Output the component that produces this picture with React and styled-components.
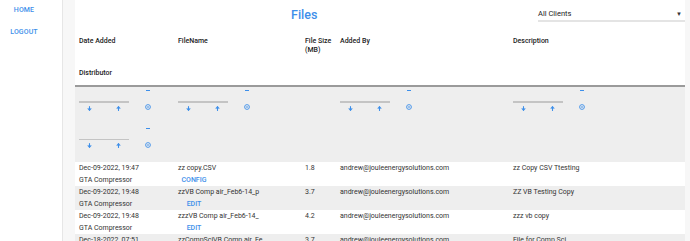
import React from "react";
import styled, { createGlobalStyle } from "styled-components";

const Global = createGlobalStyle`
  html, body {
    margin: 0;
    padding: 0;
    background: #f7f7f7;
    font-family: Roboto, "Liberation Sans", Arial, sans-serif;
  }
`;

const BLUE = "#3d8fea";

const Page = styled.div`
  display: flex;
  height: 241px;
  overflow: hidden;
`;

const Sidebar = styled.nav`
  width: 62px;
  flex: none;
  background: #fff;
  border-right: 1px solid #e6e6e6;
  box-sizing: content-box;
`;

const NavList = styled.div`
  width: 48px;
  display: flex;
  flex-direction: column;
  align-items: center;
  padding-top: 6px;
  gap: 14px;
`;

const NavLink = styled.a`
  font-size: 7px;
  line-height: 8px;
  font-weight: 500;
  color: ${BLUE};
  text-transform: uppercase;
  letter-spacing: 0.1px;
`;

const Main = styled.main`
  width: 610px;
  margin-left: 12px;
  background: #fff;
  flex: none;
`;

const Toolbar = styled.div`
  height: 30px;
  display: flex;
  align-items: flex-start;
`;

const Title = styled.h2`
  margin: 0;
  padding: 8px 0 0 216px;
  font-size: 12.5px;
  line-height: 14px;
  font-weight: 500;
  color: ${BLUE};
  flex: 1;
`;

const Select = styled.div`
  width: 147px;
  height: 22px;
  box-sizing: border-box;
  border-bottom: 2px solid #e4e4e4;
  display: flex;
  align-items: center;
  justify-content: space-between;
  padding: 6px 3px 0 0;
  font-size: 7.5px;
  color: #222;
`;

const Caret = styled.span`
  font-size: 6px;
  color: #333;
`;

const Row = styled.div`
  display: flex;
  flex-wrap: wrap;
  align-items: flex-start;
  background: ${(p) => p.$bg || "#fff"};
`;

const HeaderRow = styled(Row)`
  border-bottom: 2px solid #9a9a9a;
`;

const FilterArea = styled(Row)`
  background: #eeeeee;
`;

const Cell = styled.div`
  width: ${(p) => p.$w}px;
  box-sizing: border-box;
  padding: 0 4px;
  font-size: 7px;
  line-height: 12px;
  color: #333;
  white-space: nowrap;
  overflow: hidden;
`;

const HeadCell = styled(Cell)`
  padding: 7px 4px;
  line-height: 9px;
  font-weight: 500;
  color: #222;
`;

const ActionCell = styled(Cell)`
  text-align: center;
  padding: 0;
  font-weight: 500;
  color: ${BLUE};
  text-transform: uppercase;
`;

const FilterCell = styled.div`
  width: ${(p) => p.$w}px;
  height: 37.5px;
  box-sizing: border-box;
  padding: 0 4px;
  display: flex;
`;

const InputCol = styled.div`
  width: 50px;
  padding-top: 14px;
`;

const Underline = styled.div`
  height: 1.5px;
  background: #c4c4c4;
`;

const Arrows = styled.div`
  display: flex;
  justify-content: space-between;
  padding: 3px 8px 0 8px;
`;

const Controls = styled.div`
  margin-left: 16px;
  padding-top: 2px;
  display: flex;
  flex-direction: column;
  align-items: center;
  gap: 13px;
`;

const Minus = styled.div`
  width: 4px;
  height: 1.4px;
  background: ${BLUE};
  margin-top: 1px;
`;

const Arrow = ({ up }) => (
  <svg width="5" height="5" viewBox="0 0 12 12">
    <g transform={up ? "rotate(180 6 6)" : undefined} fill="none" stroke={BLUE} strokeWidth="2.6" strokeLinecap="round">
      <path d="M6 1.5v8.5" />
      <path d="M2.5 6.5L6 10l3.5-3.5" />
    </g>
  </svg>
);

const ClearIcon = () => (
  <svg width="6" height="6" viewBox="0 0 12 12">
    <circle cx="6" cy="6" r="4.8" fill="none" stroke={BLUE} strokeWidth="1.8" />
    <path d="M3.8 6h4.4" stroke={BLUE} strokeWidth="1.9" />
  </svg>
);

const Filter = ({ w }) => (
  <FilterCell $w={w}>
    <InputCol>
      <Underline />
      <Arrows>
        <Arrow />
        <Arrow up />
      </Arrows>
    </InputCol>
    <Controls>
      <Minus />
      <ClearIcon />
    </Controls>
  </FilterCell>
);

const W = { date: 99, name: 127, size: 35, by: 173, desc: 176, dist: 99, action: 40 };

const rows = [
  ["Dec-09-2022, 19:47", "zz copy.CSV", "1.8", "zz Copy CSV Ttesting", "Config"],
  ["Dec-09-2022, 19:48", "zzVB Comp air_Feb6-14_p", "3.7", "ZZ VB Testing Copy", "Edit"],
  ["Dec-09-2022, 19:48", "zzzVB Comp air_Feb6-14_", "4.2", "zzz vb copy", "Edit"],
  ["Dec-18-2022, 07:51", "zzCompSciVB Comp air_Fe", "3.7", "File for Comp Sci", "Edit"],
];

export default function App() {
  return (
    <>
      <Global />
      <Page>
        <Sidebar>
          <NavList>
            <NavLink>Home</NavLink>
            <NavLink>Logout</NavLink>
          </NavList>
        </Sidebar>
        <Main>
          <Toolbar>
            <Title>Files</Title>
            <Select>
              <span>All Clients</span>
              <Caret>▼</Caret>
            </Select>
          </Toolbar>
          <HeaderRow>
            <HeadCell $w={W.date}>Date Added</HeadCell>
            <HeadCell $w={W.name}>FileName</HeadCell>
            <HeadCell $w={W.size}>
              File Size
              <br />
              (MB)
            </HeadCell>
            <HeadCell $w={W.by}>Added By</HeadCell>
            <HeadCell $w={W.desc}>Description</HeadCell>
            <HeadCell $w={W.dist}>Distributor</HeadCell>
          </HeaderRow>
          <FilterArea>
            <Filter w={W.date} />
            <Filter w={W.name} />
            <FilterCell $w={W.size} />
            <Filter w={W.by} />
            <Filter w={W.desc} />
            <Filter w={W.dist} />
          </FilterArea>
          {rows.map(([date, name, size, desc, action], i) => (
            <Row key={i} $bg={i % 2 ? "#eeeeee" : "#fff"}>
              <Cell $w={W.date}>{date}</Cell>
              <Cell $w={W.name}>{name}</Cell>
              <Cell $w={W.size}>{size}</Cell>
              <Cell $w={W.by}>andrew@jouleenergysolutions.com</Cell>
              <Cell $w={W.desc}>{desc}</Cell>
              <Cell $w={W.dist}>GTA Compressor</Cell>
              <ActionCell $w={W.action}>{action}</ActionCell>
            </Row>
          ))}
        </Main>
      </Page>
    </>
  );
}
